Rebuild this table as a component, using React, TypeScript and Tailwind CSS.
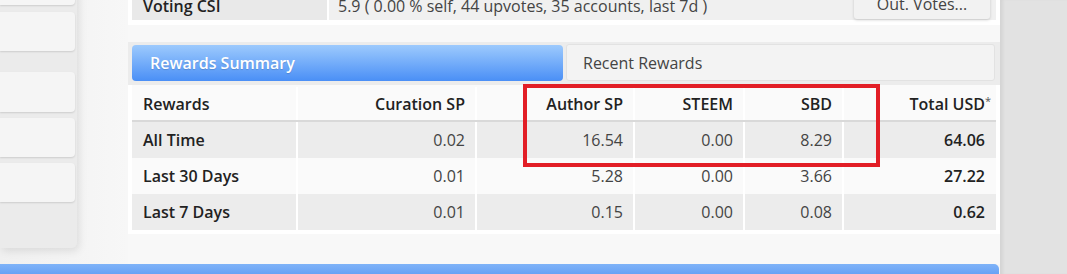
import React from "react";

const rows = [
  { label: "All Time", c: "0.02", a: "16.54", s: "0.00", b: "8.29", t: "64.06", gray: true },
  { label: "Last 30 Days", c: "0.01", a: "5.28", s: "0.00", b: "3.66", t: "27.22", gray: false },
  { label: "Last 7 Days", c: "0.01", a: "0.15", s: "0.00", b: "0.08", t: "0.62", gray: true },
];

const gridCols = "grid grid-cols-[164px_179px_158px_110px_99px_153px]";

function SideItem({ className }: { className: string }) {
  return (
    <div
      className={
        "w-[75px] bg-[#f5f5f5] rounded-r-[4px] shadow-[0_1px_2px_rgba(0,0,0,0.13)] " + className
      }
    />
  );
}

export default function App() {
  return (
    <div className="relative w-[1067px] h-[274px] overflow-hidden bg-[#f5f5f5] flex font-['Open_Sans',sans-serif] text-[16px]">
      <div className="w-[1000px] flex flex-col">
        <div className="h-[264px] flex">
          {/* sidebar */}
          <div className="w-[128px] bg-[linear-gradient(to_right,#f0f0f0,#f7f7f7)]">
            <div className="w-[77px] -mt-[40px] pb-[46px] flex flex-col bg-[#ebebeb] rounded-br-[5px] shadow-[2px_3px_8px_rgba(0,0,0,0.10)]">
              <SideItem className="h-[45px]" />
              <SideItem className="h-[39px] mt-[7px]" />
              <SideItem className="h-[40px] mt-[21px]" />
              <SideItem className="h-[39px] mt-[6px]" />
              <SideItem className="h-[39px] mt-[6px]" />
            </div>
          </div>

          {/* main panel */}
          <div className="w-[872px] flex flex-col bg-[#f8f8f8]">
            {/* voting CSI */}
            <div className="bg-white px-[4px] pb-[5px] -mt-[8px]">
              <div className="flex h-[28px]">
                <div className="w-[195px] bg-[#e9e9e9] pl-[11px] flex items-center font-semibold text-[#222]">
                  Voting CSI
                </div>
                <div className="flex-1 border-l-2 border-white bg-[#f0f0f0] pl-[9px] flex items-center justify-between text-[#444]">
                  <span>5.9 ( 0.00 % self, 44 upvotes, 35 accounts, last 7d )</span>
                  <div className="self-end mb-[1px] mr-[6px] w-[136px] h-[30px] bg-[#f2f2f2] rounded-[3px] shadow-[0_1px_3px_rgba(0,0,0,0.18)] flex items-center justify-center text-[#444]">
                    Out. Votes...
                  </div>
                </div>
              </div>
            </div>

            {/* tabs */}
            <div className="mt-[17px] h-[43px] bg-[#ececec] px-[4px] pt-[3px] flex gap-[3px]">
              <div className="w-[431px] h-[36px] rounded-[4px] bg-[linear-gradient(to_bottom,#9dcafd,#4a8ff6)] pl-[18px] flex items-center font-semibold text-white [text-shadow:0_1px_1px_rgba(0,0,0,0.15)]">
                Rewards Summary
              </div>
              <div className="w-[429px] h-[37px] -mt-[1px] rounded-[3px] bg-[#f3f3f3] border border-[#e2e2e2] pl-[16px] flex items-center text-[#444]">
                Recent Rewards
              </div>
            </div>

            {/* table */}
            <div className="bg-white px-[4px] pb-[4px]">
              <div className={gridCols + " h-[37px] pt-[2px] bg-[#fafafa] border-b-2 border-[#d9d9d9] font-semibold text-[#222]"}>
                <div className="pl-[11px] flex items-center">Rewards</div>
                <div className="border-l-2 border-white pr-[10px] flex items-center justify-end">Curation SP</div>
                <div className="border-l-2 border-white pr-[10px] flex items-center justify-end">Author SP</div>
                <div className="border-l-2 border-white pr-[10px] flex items-center justify-end">STEEM</div>
                <div className="border-l-2 border-white pr-[10px] flex items-center justify-end">SBD</div>
                <div className="border-l-2 border-white pr-[4px] flex items-center justify-end">
                  Total USD<span className="self-start mt-[6px] text-[11px] font-normal text-[#555]">*</span>
                </div>
              </div>
              {rows.map((r) => (
                <div
                  key={r.label}
                  className={gridCols + " h-[36px] text-[#444] " + (r.gray ? "bg-[#ececec]" : "bg-[#fafafa]")}
                >
                  <div className="pl-[11px] flex items-center font-semibold text-[#222]">{r.label}</div>
                  <div className="border-l-2 border-white pr-[10px] flex items-center justify-end">{r.c}</div>
                  <div className="border-l-2 border-white pr-[10px] flex items-center justify-end">{r.a}</div>
                  <div className="border-l-2 border-white pr-[10px] flex items-center justify-end">{r.s}</div>
                  <div className="border-l-2 border-white pr-[10px] flex items-center justify-end">{r.b}</div>
                  <div className="border-l-2 border-white pr-[10px] flex items-center justify-end font-semibold text-[#222]">
                    {r.t}
                  </div>
                </div>
              ))}
            </div>
          </div>
        </div>
        <div className="h-[10px] w-[999px] rounded-tr-[5px] bg-[linear-gradient(to_bottom,#7fb3f8,#68a2f5)]" />
      </div>

      <div className="flex-1 bg-[#e2e2e2] shadow-[inset_4px_0_3px_-1px_rgba(0,0,0,0.06)]" />

      {/* red annotation box */}
      <div className="absolute left-[523px] top-[84px] w-[357px] h-[83px] border-[4px] border-[#e21e26]" />
    </div>
  );
}
